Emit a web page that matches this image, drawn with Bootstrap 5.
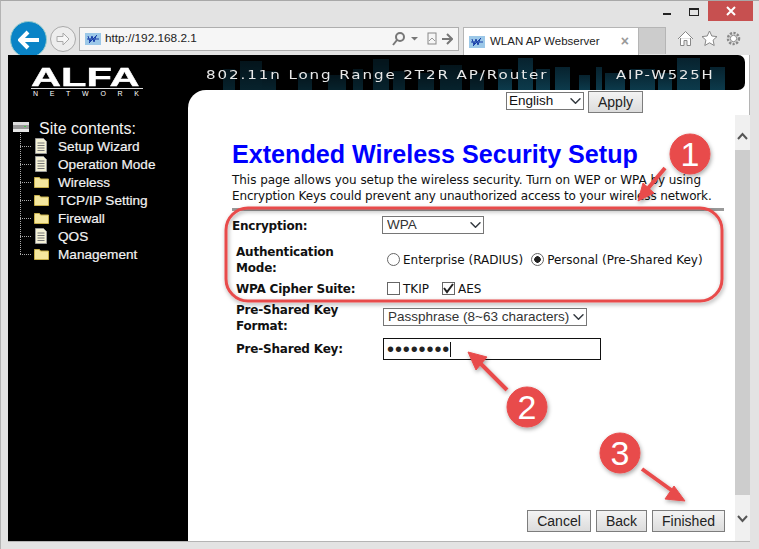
<!DOCTYPE html>
<html lang="en">

<head>
    <meta charset="UTF-8" />
    <meta name="viewport" content="width=device-width, initial-scale=1.0" />
    <title>WLAN AP Webserver</title>
    <link href="https://cdn.jsdelivr.net/npm/bootstrap@5.3.3/dist/css/bootstrap.min.css" rel="stylesheet" />
    <style>
        html, body { height: 100%; margin: 0; overflow: hidden; background: #e3e3e3; }

        .ie-window {
            position: relative;
            width: 759px;
            height: 549px;
            background: #e3e3e3;
            border-top: 1px solid #a8a8a8;
            border-left: 1px solid #b4b4b4;
            font-family: "Liberation Sans", Arial, sans-serif;
        }

        .title-row { height: 20px; padding-right: 6px; }
        .win-min { width: 8px; height: 2px; background: #222; margin: 12px 18px 0 0; }
        .win-max { width: 10px; height: 8px; border: 1px solid #222; border-top-width: 2px; margin: 7px 9px 0 0; }
        .win-close { width: 45px; height: 20px; background: #c75050; color: #fff; }

        .tool-row { height: 34px; padding-left: 9px; }
        .nav-back { width: 37px; height: 37px; border-radius: 50%; background: #0a84c6; border: 1px solid #9cc; flex: none; }
        .nav-forward { width: 26px; height: 26px; margin: 5px 0 0 3px; border-radius: 50%; border: 1px solid #a9a9a9; background: #ededed; flex: none; }
        .addr-bar {
            width: 380px; height: 24px; margin: 6px 0 0 3px;
            background: #f6f6f6; border: 1px solid #aeaeae;
            padding: 0 5px; font-size: 12px; color: #222; flex: none;
        }
        .addr-url { margin-left: 4px; font-size: 11.8px; }
        .addr-tools { gap: 9px; }
        .ie-tab {
            width: 176px; height: 28px; margin: 6px 0 0 4px; padding: 0 5px;
            background: #fff; border: 1px solid #b5b5b5; border-bottom: 0;
            font-size: 11.5px; color: #222; flex: none;
        }
        .tab-text { margin-left: 5px; }
        .tab-new { width: 27px; height: 27px; margin-top: 6px; background: #ccc; border-top: 1px solid #b5b5b5; border-right: 1px solid #b5b5b5; flex: none; }
        .tab-close { color: #999; font-weight: 700; font-size: 14px; }
        .tool-icons { margin: 9px 0 0 11px; gap: 7px; }

        .page-frame {
            width: 742px; height: 487px; margin: 0 0 0 7px;
            background: #000; border: 1px solid #b4b4b4; border-width: 0 1px 1px 0;
        }
        .head-wrap { height: 35px; background: #fff; flex: none; }
        .head-bar {
            position: relative; height: 35px; width: 737px;
            background: #000; border-radius: 0 7px 7px 0; color: #e8e8e8;
            font-family: "DejaVu Sans", sans-serif;
        }
        .city-art { position: absolute; inset: 0; border-radius: 0 7px 7px 0; }
        .logo-name {
            position: absolute; left: 23px; top: 11px; z-index: 2;
            font: 700 26px/22px "Liberation Sans", sans-serif; color: #fff;
            -webkit-text-stroke: .4px #fff; transform-origin: left top; transform: scaleX(1.6);
        }
        .logo-sub {
            position: absolute; left: 25px; top: 35px; z-index: 2;
            font: 7px/7px "Liberation Sans", sans-serif; letter-spacing: 11.7px; color: #fff; white-space: nowrap;
        }
        .logo-line { position: absolute; left: 23px; top: 33px; width: 112px; height: 1px; background: #ddd; z-index: 2; }
        .head-title { position: absolute; left: 198px; top: 12px; font-size: 13px; line-height: 16px; letter-spacing: 1.65px; white-space: nowrap; transform-origin: left top; transform: scaleX(1.16); }
        .head-model { position: absolute; left: 608px; top: 12px; font-size: 13px; line-height: 16px; letter-spacing: 1.6px; white-space: nowrap; transform-origin: left top; transform: scaleX(1.14); }

        .page-body { min-height: 0; }
        .side-tree { position: relative; width: 180px; flex: none; padding: 30px 0 0 31px; color: #f2f2f2; font-size: 13.6px; }
        .tree-head { font-size: 16px; line-height: 20px; height: 19px; margin-top: -1px; }
        .tree-rail { position: absolute; left: 12px; top: 43px; height: 121px; border-left: 1px dotted #aaa; }
        .tree-item { position: relative; height: 18px; line-height: 18px; margin-left: -1px; padding-left: 20px; white-space: nowrap; -webkit-text-stroke: .2px #f2f2f2; }
        .tree-item::before { content: ""; position: absolute; left: -18px; top: 8px; width: 11px; border-top: 1px dotted #aaa; }
        .tree-doc { position: absolute; left: -3px; top: 0; }
        .tree-dir { position: absolute; left: -4px; top: 2px; }
        .server-icon { position: absolute; left: 5px; top: 31px; }

        .main-panel { background: #fff; border-top-left-radius: 18px; min-width: 0; }
        .main-col { width: 547px; flex: none; padding-left: 44px; }
        .lang-row { height: 25px; padding: 2px 92px 0 0; gap: 4px; }
        .lang-select.form-select {
            width: 78px; height: 18px; padding: 0 0 0 2px; border: 1px solid #767676; border-radius: 0;
            font: 13.5px/16px "Liberation Sans", sans-serif; color: #111;
            background-size: 15px 12px; background-position: right 0 center;
        }
        .ie-btn {
            font: 14px/1 "Liberation Sans", sans-serif; color: #222; padding: 0;
            height: 22px; border: 1px solid #7d7d7d; border-radius: 0;
            background: linear-gradient(#f3f3f3, #dcdcdc);
        }
        .apply-btn { width: 55px; margin-top: -1px; }
        .page-title { margin: 24px 0 0; font: 700 25.12px/30px "Liberation Sans", sans-serif; color: #0000ff; white-space: nowrap; }
        .page-desc { margin: 3px 0 0; font: 12px/16px "DejaVu Sans", sans-serif; color: #111; white-space: nowrap; }
        .desc-one { letter-spacing: -.04px; }
        .desc-two { letter-spacing: -.15px; }
        .page-rule { height: 3px; width: 492px; background: #999; margin: 4px 0 0; }

        .set-row { display: grid; grid-template-columns: 151px 1fr; align-items: center; font: 12px/16px "DejaVu Sans", sans-serif; color: #111; }
        .row-enc { height: 30px; }
        .row-auth { height: 38px; }
        .row-cipher { height: 20px; }
        .row-format { height: 37px; }
        .row-key { height: 26px; }
        .set-label { font-weight: 700; padding-left: 4px; letter-spacing: -.2px; }
        .set-label.flush { padding-left: 0; }
        .opt-group { padding-left: 4px; }
        .opt-check {
            appearance: none; margin: 0 3px 0 0; width: 13px; height: 13px; vertical-align: -2px;
            border: 1px solid #666; background: #fff;
        }
        .opt-check[type="radio"] { border-radius: 50%; }
        .opt-check[type="radio"]:checked { background: radial-gradient(circle, #222 0 3px, #fff 3.5px); }
        .opt-check[type="checkbox"]:checked {
            background: #fff url("data:image/svg+xml,%3csvg xmlns='http://www.w3.org/2000/svg' viewBox='0 0 13 13'%3e%3cpath d='M2 6l3 4 6-8' fill='none' stroke='%23222' stroke-width='2'/%3e%3c/svg%3e") center / 13px 13px no-repeat;
        }
        .tkip-opt { margin-right: 13px; }
        .field-select.form-select {
            height: 18px; padding: 0 0 0 4px; border: 1px solid #767676; border-radius: 0;
            font: 13.5px/16px "Liberation Sans", sans-serif; color: #333;
            background-size: 15px 12px; background-position: right 0 center;
        }
        .enc-select.form-select { width: 102px; margin: -3px 0 0 -1px; }
        .psk-select.form-select { width: 204px; margin-top: -2px; }
        .key-input {
            width: 218px; height: 22px; border: 1px solid #111; padding: 0 3px; outline: 0;
            font: 20px/20px "Liberation Sans", sans-serif; letter-spacing: .9px; color: #222;
            background: linear-gradient(#111, #111) 66px 3px / 1px 15px no-repeat;
        }
        .btn-row { margin: auto 10px 9px 0; gap: 5px; }
        .cancel-btn { width: 64px; }
        .back-btn { width: 51px; }
        .finish-btn { width: 73px; }

        .scroll-col { width: 15px; margin-top: 25px; background: #f0f0f0; flex: none; }
        .scroll-thumb { width: 15px; height: 345px; margin-top: 35px; background: #cdcdcd; }
        .scroll-btn { height: 0; position: relative; }
        .scroll-btn svg { position: absolute; left: 2px; }
        .scroll-btn .arrow-up { top: 17px; }
        .scroll-btn .arrow-down { top: 20px; }

        .mark-layer { position: absolute; left: -1px; top: -1px; pointer-events: none; z-index: 5; }
        .mark-digit { font: 34px "Liberation Sans", sans-serif; fill: #fff; text-anchor: middle; }
    </style>
</head>

<body>
    <div class="ie-window">
        <div class="title-row d-flex justify-content-end">
            <div class="win-min"></div>
            <div class="win-max"></div>
            <div class="win-close d-flex align-items-center justify-content-center">
                <svg width="10" height="10" viewBox="0 0 10 10"><path d="M1 1l8 8M9 1l-8 8" stroke="#fff" stroke-width="2" /></svg>
            </div>
        </div>

        <div class="tool-row d-flex align-items-start">
            <div class="nav-back d-flex align-items-center justify-content-center">
                <svg width="22" height="20" viewBox="0 0 22 20"><path d="M10 2l-8 8 8 8M3 10h18" fill="none" stroke="#fff" stroke-width="4" /></svg>
            </div>
            <div class="nav-forward d-flex align-items-center justify-content-center">
                <svg width="16" height="14" viewBox="0 0 16 14"><path d="M8 1l6 6-6 6V9.500H2v-5h6z" fill="#f6f6f6" stroke="#a9a9a9" /></svg>
            </div>
            <div class="addr-bar d-flex align-items-center">
                <svg width="16" height="12" viewBox="0 0 16 12"><rect width="16" height="12" fill="#9cc8e8" /><path d="M3 3l2 6 2-6 2 6 2-6M2 6h12M4 10l8-8" stroke="#1a3fa8" fill="none" /></svg>
                <span class="addr-url">http://192.168.2.1</span>
                <span class="addr-tools ms-auto d-flex align-items-center">
                    <svg width="26" height="14" viewBox="0 0 26 14"><circle cx="8" cy="5" r="4" fill="none" stroke="#777" stroke-width="2" /><path d="M5 8l-4 5" stroke="#777" stroke-width="2" /><path d="M19 5h7l-3.500 3.500z" fill="#777" /></svg>
                    <svg width="26" height="14" viewBox="0 0 26 14"><rect x="1" y="1" width="8" height="11" fill="none" stroke="#888" /><path d="M2 9l3-3 3 3" stroke="#999" fill="none" /><path d="M15 7h10M20 2l5 5-5 5" fill="none" stroke="#777" stroke-width="2" /></svg>
                </span>
            </div>
            <div class="ie-tab d-flex align-items-center">
                <svg width="16" height="12" viewBox="0 0 16 12"><rect width="16" height="12" fill="#9cc8e8" /><path d="M3 3l2 6 2-6 2 6 2-6M2 6h12M4 10l8-8" stroke="#1a3fa8" fill="none" /></svg>
                <span class="tab-text">WLAN AP Webserver</span>
                <span class="tab-close ms-auto me-1">×</span>
            </div>
            <div class="tab-new"></div>
            <div class="tool-icons d-flex">
                <svg width="17" height="17" viewBox="0 0 17 17"><path d="M1 9l7.500-7.500L16 9M3.500 8v7.500h3.500v-5h3v5h3.500V8" fill="#fff" stroke="#888" /></svg>
                <svg width="17" height="17" viewBox="0 0 17 17"><path d="M8.500 1l2.300 5 5.200.6-3.900 3.500 1.100 5.400-4.700-2.700-4.700 2.700 1.100-5.400L1 6.600 6.200 6z" fill="#fff" stroke="#888" /></svg>
                <svg width="17" height="17" viewBox="0 0 17 17"><circle cx="8.500" cy="8.500" r="5.500" fill="none" stroke="#888" stroke-width="2.500" stroke-dasharray="2.200 1.400" /><circle cx="8.500" cy="8.500" r="3.200" fill="#fff" stroke="#888" /></svg>
            </div>
        </div>

        <div class="page-frame d-flex flex-column">
            <div class="head-wrap">
                <div class="head-bar">
                    <svg class="city-art" width="737" height="35" viewBox="0 0 737 35">
                        <defs>
                            <linearGradient id="cityFill" x1="0" y1="0" x2="0" y2="1">
                                <stop offset="0" stop-color="#07222e" />
                                <stop offset="1" stop-color="#0c3a4b" />
                            </linearGradient>
                        </defs>
                        <g fill="url(#cityFill)" opacity=".6">
                            <rect x="215" y="14" width="12" height="21" /><rect x="232" y="6" width="22" height="29" /><rect x="254" y="16" width="14" height="19" />
                            <rect x="290" y="18" width="14" height="17" /><rect x="320" y="20" width="18" height="15" /><rect x="345" y="14" width="10" height="21" />
                            <rect x="365" y="4" width="16" height="31" /><rect x="385" y="16" width="12" height="19" /><rect x="410" y="18" width="16" height="17" />
                            <rect x="432" y="10" width="22" height="25" /><rect x="462" y="18" width="14" height="17" />
                        </g>
                        <g fill="url(#cityFill)">
                            <rect x="490" y="14" width="14" height="21" /><rect x="510" y="3" width="15" height="32" /><rect x="528" y="14" width="14" height="21" />
                            <rect x="547" y="12" width="15" height="23" /><rect x="571" y="20" width="11" height="15" /><rect x="588" y="12" width="6" height="23" />
                            <rect x="597" y="18" width="20" height="17" /><rect x="622" y="14" width="25" height="21" /><rect x="650" y="18" width="14" height="17" />
                            <rect x="669" y="3" width="23" height="32" /><rect x="702" y="12" width="15" height="23" />
                        </g>
                    </svg>
                    <span class="logo-name">ALFA</span>
                    <div class="logo-line"></div>
                    <span class="logo-sub">NETWORK</span>
                    <span class="head-title">802.11n Long Range 2T2R AP/Router</span>
                    <span class="head-model">AIP-W525H</span>
                </div>
            </div>

            <div class="page-body d-flex flex-grow-1">
                <div class="side-tree">
                    <svg class="server-icon" width="16" height="12" viewBox="0 0 16 12"><rect x="0" y="1" width="16" height="3" fill="#ddd" /><rect x="0" y="4" width="16" height="4" fill="#999" /><rect x="0" y="8" width="16" height="3" fill="#e8e8e8" /><rect x="11" y="5" width="2" height="1" fill="#4c4" /></svg>
                    <div class="tree-rail"></div>
                    <div class="tree-head">Site contents:</div>
                    <div class="tree-item"><svg class="tree-doc" width="12" height="16" viewBox="0 0 12 16"><use href="#docIcon" /></svg>Setup Wizard</div>
                    <div class="tree-item"><svg class="tree-doc" width="12" height="16" viewBox="0 0 12 16"><use href="#docIcon" /></svg>Operation Mode</div>
                    <div class="tree-item"><svg class="tree-dir" width="15" height="12" viewBox="0 0 15 12"><use href="#dirIcon" /></svg>Wireless</div>
                    <div class="tree-item"><svg class="tree-dir" width="15" height="12" viewBox="0 0 15 12"><use href="#dirIcon" /></svg>TCP/IP Setting</div>
                    <div class="tree-item"><svg class="tree-dir" width="15" height="12" viewBox="0 0 15 12"><use href="#dirIcon" /></svg>Firewall</div>
                    <div class="tree-item"><svg class="tree-doc" width="12" height="16" viewBox="0 0 12 16"><use href="#docIcon" /></svg>QOS</div>
                    <div class="tree-item"><svg class="tree-dir" width="15" height="12" viewBox="0 0 15 12"><use href="#dirIcon" /></svg>Management</div>
                </div>

                <div class="main-panel d-flex flex-grow-1">
                    <div class="main-col d-flex flex-column">
                        <div class="lang-row d-flex justify-content-end align-items-start">
                            <select class="form-select lang-select"><option>English</option></select>
                            <button type="button" class="btn ie-btn apply-btn">Apply</button>
                        </div>
                        <h1 class="page-title">Extended Wireless Security Setup</h1>
                        <p class="page-desc"><span class="desc-one">This page allows you setup the wireless security. Turn on WEP or WPA by using</span><br><span class="desc-two">Encryption Keys could prevent any unauthorized access to your wireless network.</span></p>
                        <div class="page-rule"></div>

                        <div class="set-row row-enc">
                            <div class="set-label flush">Encryption:</div>
                            <select class="form-select field-select enc-select"><option>WPA</option></select>
                        </div>
                        <div class="set-row row-auth">
                            <div class="set-label">Authentication<br>Mode:</div>
                            <div class="opt-group d-flex">
                                <label class="me-2"><input class="opt-check" type="radio" name="authMode">Enterprise (RADIUS)</label>
                                <label><input class="opt-check" type="radio" name="authMode" checked>Personal (Pre-Shared Key)</label>
                            </div>
                        </div>
                        <div class="set-row row-cipher">
                            <div class="set-label">WPA Cipher Suite:</div>
                            <div class="opt-group d-flex">
                                <label class="tkip-opt"><input class="opt-check" type="checkbox">TKIP</label>
                                <label><input class="opt-check" type="checkbox" checked>AES</label>
                            </div>
                        </div>
                        <div class="set-row row-format">
                            <div class="set-label">Pre-Shared Key<br>Format:</div>
                            <select class="form-select field-select psk-select"><option>Passphrase (8~63 characters)</option></select>
                        </div>
                        <div class="set-row row-key">
                            <div class="set-label">Pre-Shared Key:</div>
                            <input class="key-input" type="password" value="abcdefgh">
                        </div>

                        <div class="btn-row d-flex justify-content-end">
                            <button type="button" class="btn ie-btn cancel-btn">Cancel</button>
                            <button type="button" class="btn ie-btn back-btn">Back</button>
                            <button type="button" class="btn ie-btn finish-btn">Finished</button>
                        </div>
                    </div>
                    <div class="scroll-col">
                        <div class="scroll-btn"><svg class="arrow-up" width="11" height="8" viewBox="0 0 11 8"><path d="M1 7l4.500-5L10 7" fill="none" stroke="#555" stroke-width="2" /></svg></div>
                        <div class="scroll-thumb"></div>
                        <div class="scroll-btn"><svg class="arrow-down" width="11" height="8" viewBox="0 0 11 8"><path d="M1 1l4.500 5L10 1" fill="none" stroke="#555" stroke-width="2" /></svg></div>
                    </div>
                </div>
            </div>
        </div>

        <svg class="mark-layer" width="759" height="549" viewBox="0 0 759 549">
            <defs>
                <filter id="markShadow" x="-20%" y="-20%" width="140%" height="140%">
                    <feDropShadow dx="1" dy="2" stdDeviation="2" flood-color="#000" flood-opacity=".35" />
                </filter>
                <symbol id="docIcon" viewBox="0 0 12 16"><path d="M.5.500h8l3 3v12H.5z" fill="#f4f1d6" stroke="#999" /><path d="M2.500 5h7M2.500 7.500h7M2.500 10h7M2.500 12.500h7" stroke="#777" /></symbol>
                <symbol id="dirIcon" viewBox="0 0 15 12"><path d="M.5 2.500V1.500h5l1 1.500h8v8.500H.5z" fill="#f5e79e" stroke="#c8b04a" /></symbol>
            </defs>
            <g filter="url(#markShadow)" fill="#e84c4c" stroke="#e84c4c">
                <rect x="226" y="208" width="496" height="93" rx="22" fill="none" stroke-width="3" />
                <path d="M665 168l-20 24" stroke-width="4" />
                <path d="M638 201l5-18 11 10z" />
                <path d="M507 390l-30-30" stroke-width="4" />
                <path d="M468 352l19 5-11 13z" />
                <path d="M642 469l32 23" stroke-width="4" />
                <path d="M685 501l-20-2 9-13z" />
                <circle cx="690" cy="154" r="20" />
                <circle cx="527" cy="407" r="20" />
                <circle cx="620" cy="453" r="20" />
            </g>
            <text class="mark-digit" x="690" y="166">1</text>
            <text class="mark-digit" x="527" y="419">2</text>
            <text class="mark-digit" x="620" y="465">3</text>
        </svg>
    </div>

    <script src="https://cdn.jsdelivr.net/npm/bootstrap@5.3.3/dist/js/bootstrap.bundle.min.js"></script>
</body>

</html>
